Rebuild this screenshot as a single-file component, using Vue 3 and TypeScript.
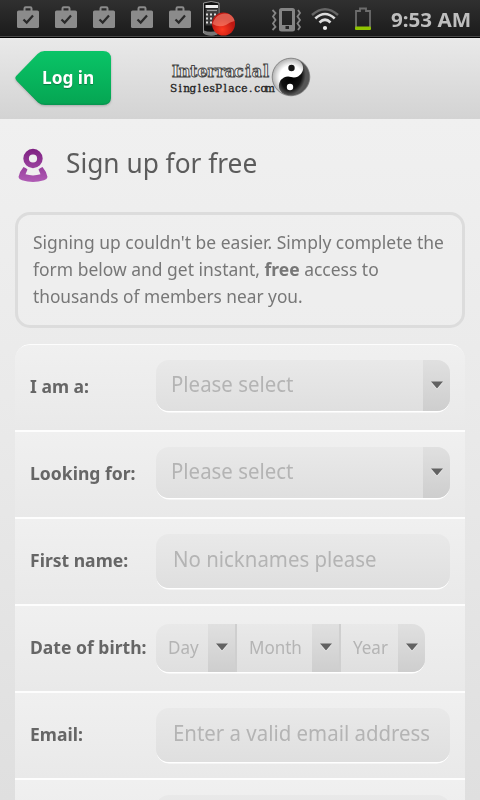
<script setup lang="ts">
interface Field {
  label: string
  kind: 'select' | 'input' | 'date'
  hint: string
}

const fields: Field[] = [
  { label: 'I am a:', kind: 'select', hint: 'Please select' },
  { label: 'Looking for:', kind: 'select', hint: 'Please select' },
  { label: 'First name:', kind: 'input', hint: 'No nicknames please' },
  { label: 'Date of birth:', kind: 'date', hint: '' },
  { label: 'Email:', kind: 'input', hint: 'Enter a valid email address' },
  { label: '', kind: 'input', hint: '' },
]
const dateParts = ['Day', 'Month', 'Year']

// Even typewriter pitch: the centre of every character cell in a wordmark line.
const pitch = (count: number, start: number, step: number): string =>
  Array.from({ length: count }, (_, i) => (start + step * (i + 0.5)).toFixed(2)).join(' ')
const topCells = pitch(11, 1, 9.05)
const bottomCells = pitch(16, 0.5, 6.42)
</script>

<template>
  <div class="screen">
    <div class="status">
      <div class="bags">
        <svg v-for="n in 5" :key="n" class="bag" viewBox="0 0 24 24">
          <path d="M8.500 6V3.500Q8.500 2.300 9.700 2.300H14.300Q15.500 2.300 15.500 3.500V6" fill="none" stroke="#8b8b8b" stroke-width="2" />
          <rect x="1" y="5.500" width="22" height="17.500" rx="1.600" fill="#8b8b8b" />
          <path d="M7.500 14.500L10.700 17.600L17 10.500" fill="none" stroke="#292929" stroke-width="2.200" />
        </svg>
      </div>
      <svg class="recorder" viewBox="0 0 34 37">
        <path d="M1.500 3Q9 0 17 3V33Q10 37 1.500 33Z" fill="#111" stroke="#b5b5b5" stroke-width=".8" />
        <rect x="3.500" y="5" width="12.500" height="3" fill="#eee" />
        <rect x="3.500" y="8.500" width="12.500" height="17" fill="#3b3b3b" />
        <path d="M5 10.500H15" stroke="#999" stroke-width="1.200" />
        <path d="M4 14.500H16M4 18.500H16M4 22.500H16" stroke="#ddd" stroke-width="1.800" stroke-dasharray="2 2" />
        <path d="M2 30.500Q8 33 16 30.500V34Q9 37 2 34Z" fill="#777" />
        <circle cx="21.500" cy="24" r="11.500" fill="url(#ball)" />
        <path d="M10.500 24C13 15 20 12 27 14Q32 17 32.500 21Q28 22 24 25Q17 28 10.500 24Z" fill="#ff9b86" opacity=".5" />
        <defs>
          <radialGradient id="ball" cx=".45" cy=".75"><stop offset="0" stop-color="#ff3a20" /><stop offset="1" stop-color="#bd1812" /></radialGradient>
        </defs>
      </svg>
      <svg class="vibrate" viewBox="0 0 32 24">
        <rect x="9.500" y="1.500" width="13" height="20.500" rx="1" fill="none" stroke="#858585" stroke-width="3" />
        <path d="M8.500 17H23.500V22H8.500Z" fill="#858585" />
        <rect x="14.500" y="18" width="3.500" height="3" fill="#252525" />
        <path d="M1.500 2L4.500 5L2 8.500L4.500 12L2 15.500L4.500 19L1.500 22M27 2L29 5L26.500 8.500L29 12L26.500 15.500L29 19L27 22" fill="none" stroke="#858585" stroke-width="1.800" />
      </svg>
      <svg class="wifi" viewBox="0 0 28 24">
        <path d="M1 8Q14-3.500 27 8" fill="none" stroke="#666" stroke-width="2.400" />
        <path d="M4.300 11.500Q14 2.500 23.700 11.500M8.500 15.500Q14 10 19.500 15.500" fill="none" stroke="#ddd" stroke-width="2.600" />
        <circle cx="14" cy="21" r="2.100" fill="#eee" />
      </svg>
      <svg class="battery" viewBox="0 0 18 24">
        <path d="M2 20V4H6V1.500H12V4H16V20" fill="none" stroke="#6d6d6d" stroke-width="1.800" />
        <rect x="1" y="19.500" width="16" height="3.500" rx="1" fill="#8fc400" />
      </svg>
      <span class="clock">9:53 AM</span>
    </div>

    <header class="header">
      <a class="login">
        <svg class="login-shape" viewBox="0 0 96 56">
          <defs>
            <linearGradient id="green" x1="0" y1="0" x2="0" y2="1"><stop offset="0" stop-color="#0ac467" /><stop offset="1" stop-color="#05a653" /></linearGradient>
          </defs>
          <path d="M1.500 29.500L23 51.500Q26 54 30 54H88Q96 54 96 46V12H20Z" fill="#079750" />
          <path d="M1.200 25Q-.5 27 1.200 29L22.500 50Q25.500 52.500 29.500 52.500H88Q96 52.500 96 44.500V8Q96 0 88 0H29.500Q25.500 0 22.500 3Z" fill="url(#green)" />
        </svg>
        <span class="login-text">Log in</span>
      </a>
      <svg class="logo" viewBox="0 0 142 44">
        <defs>
          <radialGradient id="pearl"><stop offset=".6" stop-color="#fff" /><stop offset="1" stop-color="#b0b0b0" /></radialGradient>
          <radialGradient id="coal" cx=".35"><stop offset="0" stop-color="#000" /><stop offset=".7" stop-color="#111" /><stop offset="1" stop-color="#555" /></radialGradient>
        </defs>
        <text class="brand-top" :x="topCells" y="21">Interracial</text>
        <text class="brand-bottom" :x="bottomCells" y="36">SinglesPlace.com</text>
        <circle cx="121" cy="21" r="18.800" fill="url(#pearl)" stroke="#777" stroke-width=".8" />
        <path transform="rotate(18 121 21)" d="M121 2.500A18.500 18.500 0 0 1 121 39.500A9.250 9.250 0 0 1 121 21A9.250 9.250 0 0 0 121 2.500Z" fill="url(#coal)" />
        <circle cx="121.500" cy="12" r="3.200" fill="#161616" />
        <circle cx="120" cy="31" r="3.200" fill="#fff" />
      </svg>
    </header>

    <main class="content">
      <h1 class="title">
        <svg class="person" viewBox="0 0 30 36">
          <defs>
            <linearGradient id="plum" x1="0" y1="0" x2="0" y2="34" gradientUnits="userSpaceOnUse"><stop offset="0" stop-color="#7d1f80" /><stop offset="1" stop-color="#b05cb5" /></linearGradient>
          </defs>
          <circle cx="15" cy="10.500" r="6.900" fill="none" stroke="url(#plum)" stroke-width="5.600" />
          <path d="M5.500 19Q1.200 24 .5 29Q.8 31.300 4 32.300Q15 35.500 26 32.300Q29.200 31.300 29.500 29Q28.800 24 24.500 19Q21.500 20 20.500 21.500L22.500 26.300Q15 28.500 7.500 26.300L9.500 21.500Q8.500 20 5.500 19Z" fill="url(#plum)" />
        </svg>
        <span class="title-text">Sign up for free</span>
      </h1>

      <p class="notice">
        <span class="line">Signing up couldn't be easier. Simply complete the</span>
        <span class="line">form below and get instant, <b>free</b> access to</span>
        <span class="line last">thousands of members near you.</span>
      </p>

      <form class="form">
        <div v-for="(f, i) in fields" :key="i" class="row" :class="f.kind">
          <label class="label"><span class="label-text">{{ f.label }}</span></label>
          <div v-if="f.kind === 'date'" class="control dates">
            <div v-for="part in dateParts" :key="part" class="part" :class="part.toLowerCase()">
              <span class="part-text"><span class="squeeze">{{ part }}</span></span>
              <span class="drop"><svg class="arrow" viewBox="0 0 12 8"><path d="M0 .5H12L6 7.500Z" fill="#626262" /></svg></span>
            </div>
          </div>
          <div v-else class="control">
            <span class="hint"><span class="squeeze">{{ f.hint }}</span></span>
            <span v-if="f.kind === 'select'" class="drop"><svg class="arrow" viewBox="0 0 12 8"><path d="M0 .5H12L6 7.500Z" fill="#626262" /></svg></span>
          </div>
        </div>
      </form>
    </main>
  </div>
</template>

<style>
body { overflow: hidden; }
</style>

<style scoped>
.screen {
  width: 480px;
  height: 800px;
  overflow: hidden;
  background: linear-gradient(#f0f0f0 119px, #e9e9e9 440px, #dfdfdf);
  font-family: "Noto Sans", "Open Sans", sans-serif;
  color: #666;
}
.status {
  box-sizing: border-box;
  height: 38px;
  display: flex;
  align-items: flex-start;
  background: linear-gradient(#303030, #1b1b1b 36px, #484848 36px, #484848 37px, #000 37px);
}
.bags { display: flex; gap: 14px; padding: 5px 0 0 16px; }
.bag { width: 24px; height: 24px; }
.recorder { width: 34px; height: 37px; margin-left: 10px; }
.vibrate { width: 32px; height: 24px; margin: 8px 0 0 35px; }
.wifi { width: 28px; height: 24px; margin: 7px 0 0 8px; }
.battery { width: 18px; height: 24px; margin: 7px 0 0 15px; }
.clock {
  margin-left: 19px;
  font-size: 20px;
  line-height: 39px;
  font-weight: 700;
  color: #bebebe;
  white-space: nowrap;
  transform: scaleX(1.03);
  transform-origin: left;
}
.header {
  box-sizing: border-box;
  height: 81px;
  padding: 13px 15px;
  display: flex;
  background: linear-gradient(#e9e9e9, #d3d3d3);
}
.login { position: relative; width: 96px; height: 56px; flex: none; }
.login-shape { display: block; width: 96px; height: 56px; filter: drop-shadow(0 1px 1px #aaa); }
.login-text {
  position: absolute;
  left: 27px;
  top: 13px;
  font-size: 18px;
  line-height: 27px;
  font-weight: 700;
  color: #fff;
  white-space: nowrap;
  text-shadow: 0 1px 1px #087a40;
  transform: scaleX(.96);
  transform-origin: left;
}
.logo { width: 142px; height: 44px; margin: 5px 0 0 59px; }
.brand-top {
  font: 700 16px "DejaVu Serif", serif;
  text-anchor: middle;
  fill: #f2f2f2;
  stroke: #444;
  stroke-width: .9px;
}
.brand-bottom {
  font: 400 10.500px "DejaVu Serif", serif;
  text-anchor: middle;
  fill: #222;
  stroke: #222;
  stroke-width: .3px;
}
.content { padding: 29px 15px 0; }
.title {
  margin: 0;
  height: 34px;
  display: flex;
  font-size: 28px;
  font-weight: 400;
  line-height: 28px;
  color: #5c5c5c;
}
.person { width: 30px; height: 36px; margin-left: 3px; }
.title-text { margin-left: 18px; white-space: nowrap; transform: scaleX(.938); transform-origin: left; }
.notice {
  box-sizing: border-box;
  height: 116px;
  margin: 30px 0 16px;
  padding: 14px 0 0 15px;
  border: 3px solid #dcdcdc;
  border-radius: 15px;
  background: rgba(255, 255, 255, .1);
  font-size: 18px;
  line-height: 27px;
  color: #777;
}
.line { display: block; white-space: nowrap; transform: scaleX(.97); transform-origin: left; }
.line.last { transform: scaleX(.96); }
.form { border-radius: 15px 15px 0 0; overflow: hidden; }
.row {
  box-sizing: border-box;
  height: 87px;
  padding-left: 15px;
  display: flex;
  align-items: flex-start;
  border-top: 2px solid #fdfdfd;
  background: linear-gradient(#f0f0f0, #e9e9e9);
}
.row:first-child { height: 86px; border-top-width: 1px; border-radius: 15px 15px 0 0; }
.label { width: 126px; flex: none; font-size: 18px; font-weight: 700; line-height: 27px; margin-top: 28px; }
.label-text { display: block; white-space: nowrap; transform: scaleX(.975); transform-origin: left; }
.control {
  width: 294px;
  height: 51px;
  margin-top: 15px;
  display: flex;
  border-radius: 13px;
  overflow: hidden;
  background: linear-gradient(#e9e9e9, #dfdfdf);
  box-shadow: 0 2px 0 -.5px #fff;
}
.input .control { height: 54px; }
.dates { width: 269px; height: 48px; margin-top: 18px; }
.hint { flex: 1; padding-left: 15px; font-size: 22px; line-height: 46px; color: #b4b4b4; }
.input .hint { padding-left: 17px; line-height: 48px; }
.squeeze { display: block; white-space: nowrap; transform: scaleX(.928); transform-origin: left; }
.drop {
  width: 27px;
  flex: none;
  display: flex;
  align-items: center;
  justify-content: center;
  background: linear-gradient(#e0e0e0, #cecece);
}
.arrow { width: 12px; height: 8px; margin-bottom: 2px; filter: drop-shadow(0 1px 0 #eee); }
.part { display: flex; box-sizing: border-box; }
.part-text { flex: 1; min-width: 0; padding-left: 12px; font-size: 18px; line-height: 47px; color: #b4b4b4; }
.part-text .squeeze { transform: scaleX(.945); }
.day { width: 81px; border-right: 2px solid #cfcfcf; }
.month { width: 104px; border-right: 2px solid #cfcfcf; }
.year { width: 84px; }
</style>
